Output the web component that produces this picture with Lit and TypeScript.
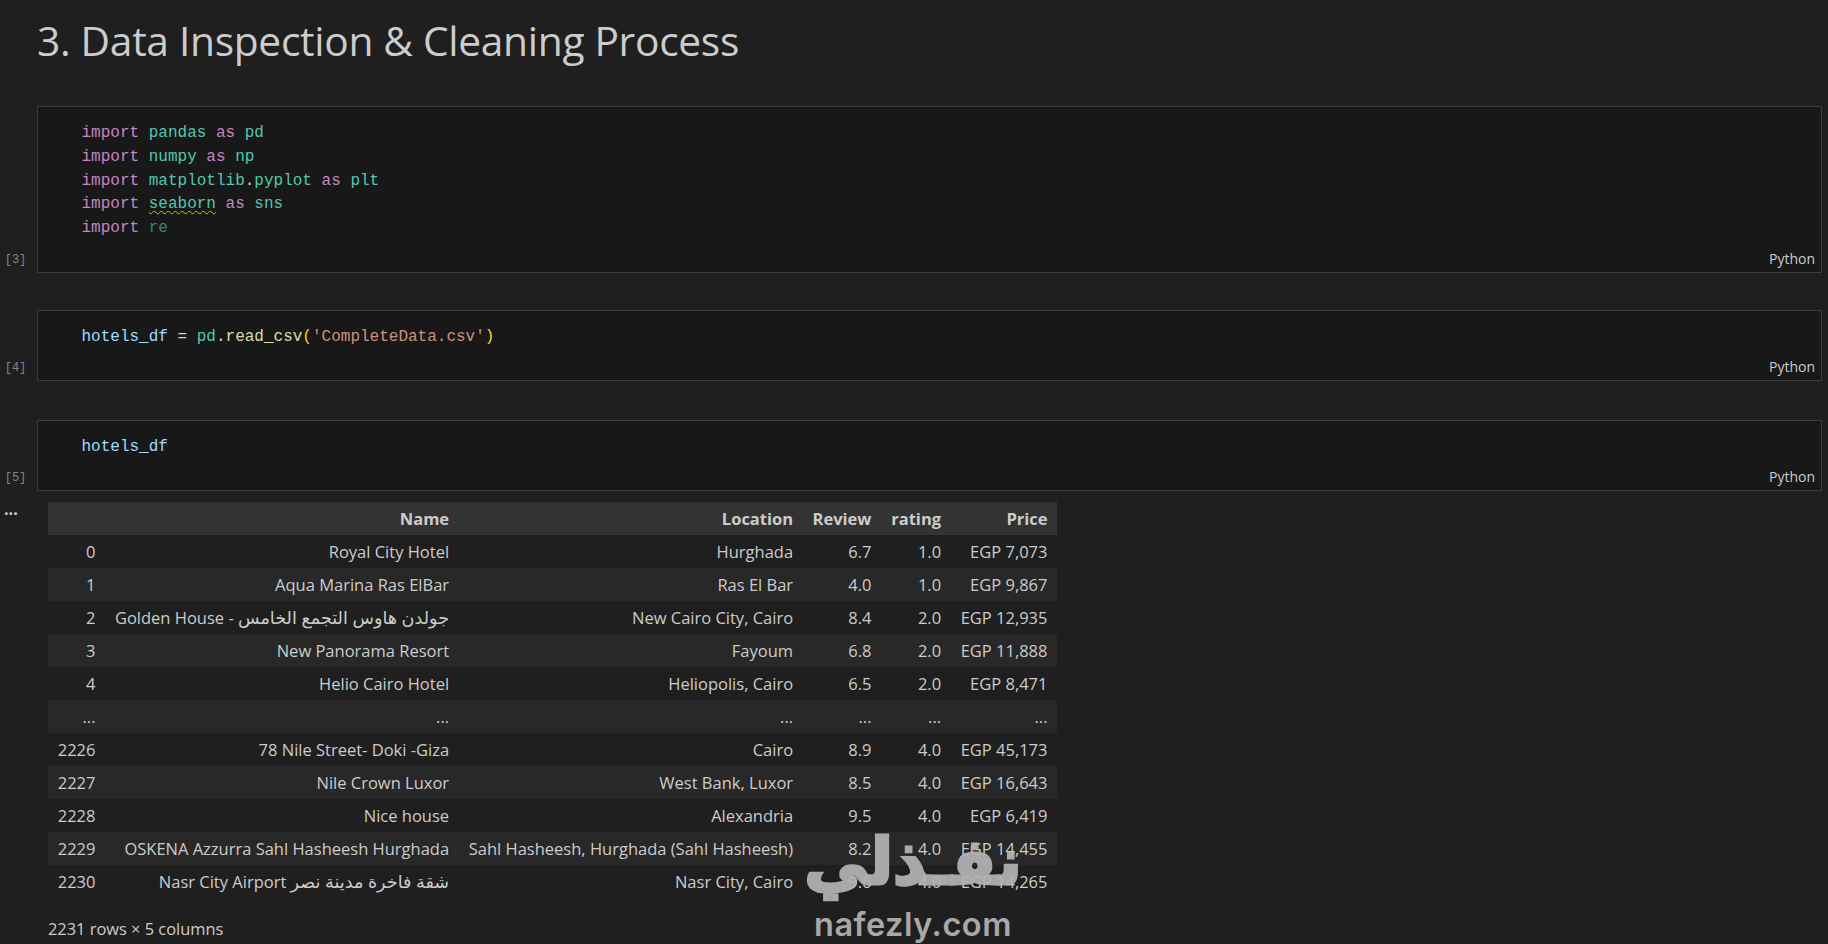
import { LitElement, html, css } from "lit";
import { customElement } from "lit/decorators.js";

const ROWS: string[][] = [
  ["0", "Royal City Hotel", "Hurghada", "6.7", "1.0", "EGP 7,073"],
  ["1", "Aqua Marina Ras ElBar", "Ras El Bar", "4.0", "1.0", "EGP 9,867"],
  ["2", "جولدن هاوس التجمع الخامس - Golden House", "New Cairo City, Cairo", "8.4", "2.0", "EGP 12,935"],
  ["3", "New Panorama Resort", "Fayoum", "6.8", "2.0", "EGP 11,888"],
  ["4", "Helio Cairo Hotel", "Heliopolis, Cairo", "6.5", "2.0", "EGP 8,471"],
  ["...", "...", "...", "...", "...", "..."],
  ["2226", "78 Nile Street- Doki -Giza", "Cairo", "8.9", "4.0", "EGP 45,173"],
  ["2227", "Nile Crown Luxor", "West Bank, Luxor", "8.5", "4.0", "EGP 16,643"],
  ["2228", "Nice house", "Alexandria", "9.5", "4.0", "EGP 6,419"],
  ["2229", "OSKENA Azzurra Sahl Hasheesh Hurghada", "Sahl Hasheesh, Hurghada (Sahl Hasheesh)", "8.2", "4.0", "EGP 14,455"],
  ["2230", "شقة فاخرة مدينة نصر Nasr City Airport", "Nasr City, Cairo", "9.6", "4.0", "EGP 14,265"],
];
const HEAD = ["", "Name", "Location", "Review", "rating", "Price"];

@customElement("app-root")
export class AppRoot extends LitElement {
  static styles = css`
    :host { display: block; position: relative; height: 944px; overflow: hidden; background: #1f1f1f; color: #cccccc; font-family: "Open Sans", "DejaVu Sans", sans-serif; }
    h1 { margin: 0; padding: 12px 0 0 37px; height: 106px; box-sizing: border-box; font-size: 40.7px; line-height: 56px; font-weight: 400; color: #cccccc; letter-spacing: -0.3px; }
    .row { display: flex; margin-right: 6px; margin-bottom: 37px; }
    .row.wide { margin-bottom: 39px; }
    .row.out { margin-bottom: 0; margin-top: -26px; }
    .gutter { width: 37px; flex: none; display: flex; flex-direction: column; justify-content: flex-end; align-items: center; box-sizing: border-box; padding: 0 6px 6px 0; font-family: "Liberation Mono", monospace; font-size: 12px; line-height: 14px; color: #858585; }
    .cell { flex: 1; background: #181818; border: 1px solid #3c3c3c; box-sizing: border-box; padding: 15px 6px 0 43.5px; display: flex; flex-direction: column; justify-content: space-between; }
    .cell.tall { height: 167px; }
    .cell.short { height: 71px; padding-top: 15px; }
    .code { font-family: "Liberation Mono", monospace; font-size: 16px; line-height: 23.75px; white-space: pre; color: #d4d4d4; }
    .lang { align-self: flex-end; font-size: 14px; line-height: 18px; color: #cccccc; margin-bottom: 4px; }
    .k { color: #c586c0; } .m { color: #4ec9b0; } .v { color: #9cdcfe; } .f { color: #dcdcaa; } .s { color: #ce9178; } .p { color: #ffd700; }
    .dim { opacity: .6; }
    .sq { text-decoration: underline wavy #d7ba00 1px; text-underline-offset: 2px; }
    .dots { width: 37px; flex: none; box-sizing: border-box; padding: 0 0 0 4px; font-size: 16px; font-weight: 700; line-height: 14px; color: #cccccc; letter-spacing: 0; }
    .output { padding-left: 11px; }
    table { border-collapse: collapse; table-layout: fixed; width: 1009px; font-size: 16.5px; }
    th, td { height: 33px; box-sizing: border-box; padding: 1px 9.5px 0; text-align: right; white-space: nowrap; overflow: visible; line-height: 32px; font-weight: 400; unicode-bidi: plaintext; }
    th { font-weight: 700; background: #333333; color: #cccccc; }
    tbody tr:nth-child(even) { background: #282828; }
    .ar { font-size: 17.6px; line-height: 0; }
    .shape { margin: 20px 0 0; font-size: 16.4px; line-height: 22px; color: #cccccc; }
    .wm { position: absolute; left: 793px; top: 816px; width: 240px; text-align: center; color: #b4b4b4; opacity: .92; pointer-events: none; }
    .wm-ar { font-family: "DejaVu Sans", sans-serif; font-weight: 700; font-size: 64px; line-height: 92px; direction: rtl; -webkit-text-stroke: 3px #b4b4b4; }
    .wm-en { font-family: Inter, sans-serif; font-weight: 600; font-size: 32.5px; line-height: 30px; margin-top: 2px; letter-spacing: 0.5px; }
  `;

  private cellText(c: string) {
    return c
      .split(/([\u0600-\u06FF][\u0600-\u06FF ]*[\u0600-\u06FF])/)
      .map((part, i) => (i % 2 ? html`<span class="ar">${part}</span>` : part));
  }

  render() {
    const w = [57, 353.6, 344, 78.4, 69.6, 106.4];
    return html`
      <h1>3. Data Inspection &amp; Cleaning Process</h1>
      <div class="row">
        <div class="gutter">[3]</div>
        <div class="cell tall">
          <div class="code"><span class="k">import</span> <span class="m">pandas</span> <span class="k">as</span> <span class="m">pd</span>
<span class="k">import</span> <span class="m">numpy</span> <span class="k">as</span> <span class="m">np</span>
<span class="k">import</span> <span class="m">matplotlib</span>.<span class="m">pyplot</span> <span class="k">as</span> <span class="m">plt</span>
<span class="k">import</span> <span class="m sq">seaborn</span> <span class="k">as</span> <span class="m">sns</span>
<span class="k">import</span> <span class="m dim">re</span></div>
          <div class="lang">Python</div>
        </div>
      </div>
      <div class="row wide">
        <div class="gutter">[4]</div>
        <div class="cell short">
          <div class="code"><span class="v">hotels_df</span> = <span class="m">pd</span>.<span class="f">read_csv</span><span class="p">(</span><span class="s">'CompleteData.csv'</span><span class="p">)</span></div>
          <div class="lang">Python</div>
        </div>
      </div>
      <div class="row">
        <div class="gutter">[5]</div>
        <div class="cell short">
          <div class="code"><span class="v">hotels_df</span></div>
          <div class="lang">Python</div>
        </div>
      </div>
      <div class="row out">
        <div class="dots">...</div>
        <div class="output">
          <table>
            <colgroup>${w.map((x) => html`<col style="width:${x}px" />`)}</colgroup>
            <thead><tr>${HEAD.map((h) => html`<th>${h}</th>`)}</tr></thead>
            <tbody>${ROWS.map((r) => html`<tr>${r.map((c) => html`<td>${this.cellText(c)}</td>`)}</tr>`)}</tbody>
          </table>
          <div class="shape">2231 rows × 5 columns</div>
        </div>
      </div>
      <div class="wm">
        <div class="wm-ar">نفـذلي</div>
        <div class="wm-en">nafezly.com</div>
      </div>
    `;
  }
}
